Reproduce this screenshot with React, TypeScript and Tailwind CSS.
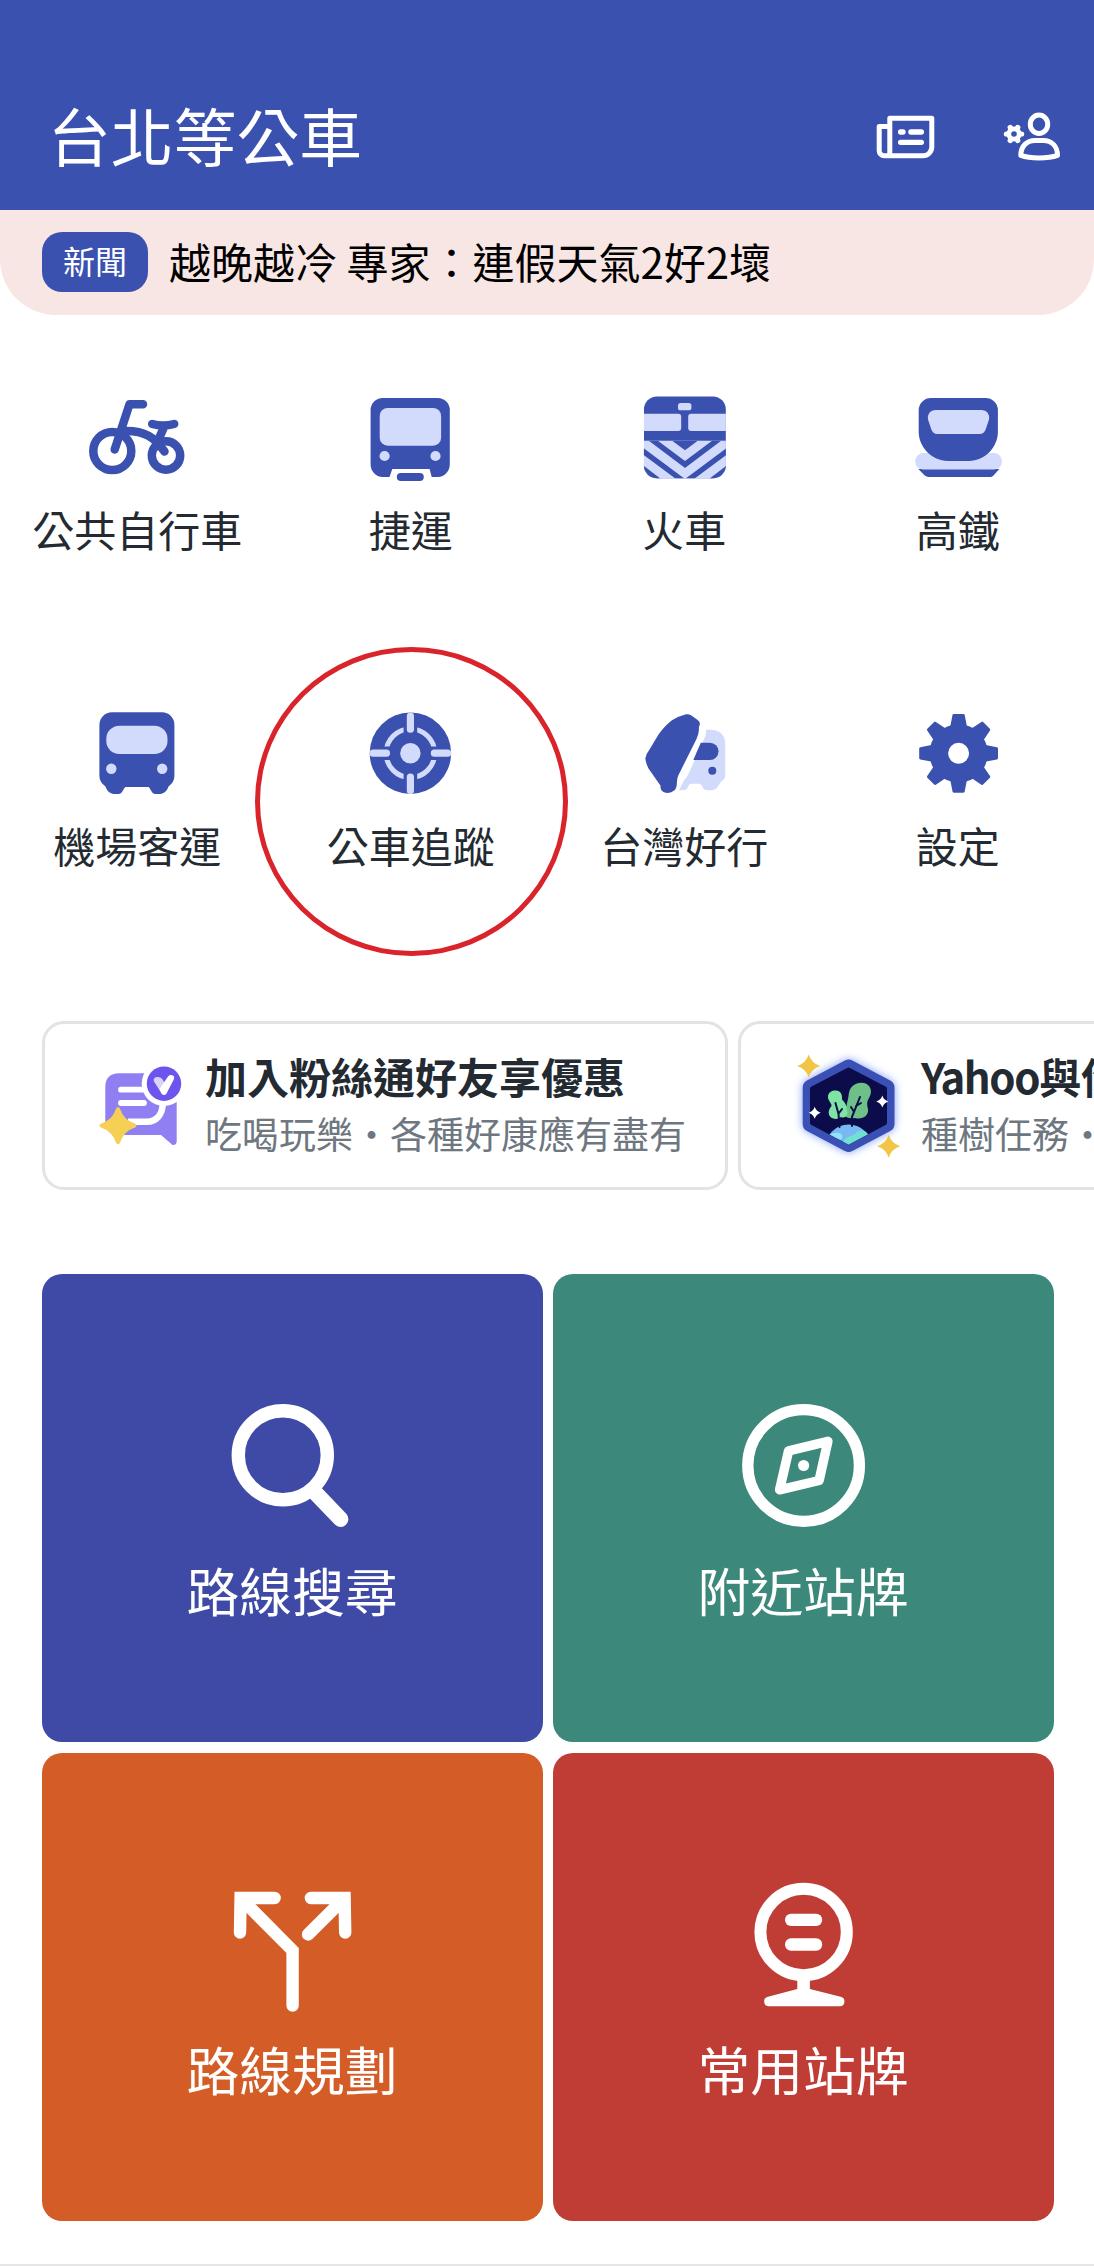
import type { ReactNode } from "react";

const BLUE = "#3b51b0";
const PALE = "#d2dbfb";

// four pointed sparkle centred on (x, y)
const Sparkle = ({ x, y, r, color, soft = 0 }: { x: number; y: number; r: number; color: string; soft?: number }) => {
  const k = r * 0.24;
  return (
    <path
      d={`M${x} ${y - r}Q${x + k} ${y - k} ${x + r} ${y}Q${x + k} ${y + k} ${x} ${y + r}Q${x - k} ${y + k} ${x - r} ${y}Q${x - k} ${y - k} ${x} ${y - r}Z`}
      fill={color}
      stroke={color}
      strokeWidth={soft}
      strokeLinejoin="round"
    />
  );
};

const NewsIcon = () => (
  <svg width="60" height="48" viewBox="0 0 60 48" fill="none" stroke="#fff" strokeWidth="5">
    <path d="M13.8 42.8V5.2H55.8V34A9 8.8 0 0 1 46.8 42.8H8.2A5 5 0 0 1 3.2 37.8V13.5H13.8" strokeLinejoin="round" />
    <path d="M24.6 19H27M34.9 19H45.4M24.6 29.3H45.4" strokeWidth="5.3" strokeLinecap="round" />
  </svg>
);

const AccountIcon = () => (
  <svg width="60" height="52" viewBox="0 0 60 52" fill="none" stroke="#fff" strokeWidth="5">
    <ellipse cx="36" cy="13.3" rx="8.7" ry="9.2" />
    <path d="M17.8 44.4C17.8 35 24 29.4 32 29.4H40.5C48.5 29.4 54.5 35 54.5 44.4C45 47.8 27 47.8 17.8 44.4Z" strokeLinejoin="round" />
    <circle cx="11" cy="23" r="5.2" strokeWidth="4.8" />
    {[0, 60, 120, 180, 240, 300].map((deg) => (
      <circle key={deg} cx="18.6" cy="23" r="2.6" fill="#fff" stroke="none" transform={`rotate(${deg} 11 23)`} />
    ))}
  </svg>
);

const BikeIcon = () => (
  <g fill="none" stroke={BLUE} strokeWidth="8.5" strokeLinecap="round" strokeLinejoin="round">
    <circle cx="23.3" cy="59" r="19" />
    <circle cx="77" cy="63.5" r="14.2" />
    <path d="M54 12.3H40.5L25.7 57.5" />
    <path d="M63.2 32C70 34 78 34 85.2 32M75.5 34L68 51" />
    <path d="M34 39C56 38 66 46 75.5 59.5" />
  </g>
);

const MetroIcon = () => (
  <g fill={BLUE}>
    <path d="M20.6 6H75.8A12 12 0 0 1 87.8 18V72A12.6 12.6 0 0 1 75.8 85H69.7L67.6 77H30.3L27.5 85H20.6A12.6 12.6 0 0 1 8.6 72V18A12 12 0 0 1 20.6 6Z" />
    <rect x="34.8" y="81" width="27" height="8" rx="4" />
    <rect x="17.7" y="16" width="61.4" height="37.7" rx="8" fill={PALE} />
    <circle cx="22.6" cy="64" r="5.1" fill={PALE} />
    <circle cx="73.5" cy="64" r="5.1" fill={PALE} />
  </g>
);

const TrainIcon = () => (
  <g fill={BLUE}>
    <clipPath id="train-body">
      <rect x="7.9" y="4.5" width="82" height="81.8" rx="13" />
    </clipPath>
    <g clipPath="url(#train-body)">
      <rect x="7.9" y="4" width="82" height="83" />
      <g fill={PALE}>
        <rect x="42" y="11" width="13.4" height="7.3" rx="2.6" />
        <path d="M7 21.7H42.2A3 3 0 0 1 45.2 24.7V36A3 3 0 0 1 42.2 39H7Z" />
        <path d="M91 21.7H55.2A3 3 0 0 0 52.2 24.7V36A3 3 0 0 0 55.2 39H91Z" />
        <rect x="7" y="48.7" width="84" height="39" />
      </g>
      <path d="M36.2 48.7H61.8L49 58.3Z" />
      <path d="M12.8 48.7H21.9L49 69L76.1 48.7H85.2L49 76Z" />
      <path d="M7 55.7L49 87L91 55.7V62.5L58 87H40L7 62.5Z" />
      <path d="M7 73.3L25 87H7ZM91 73.3L73 87H91Z" />
    </g>
  </g>
);

const HighSpeedRailIcon = () => (
  <g fill={BLUE}>
    <path d="M9.3 77H90.3L84.5 83.4Q83 85 81 85H19.5Q17.5 85 15.5 83.3Z" />
    <rect x="6.2" y="61" width="86.8" height="16.6" rx="8.2" fill={PALE} />
    <path d="M22 6H76.6A12.3 12.3 0 0 1 88.9 18V40C88.9 55 76 69 60 69H39C23 69 9.7 55 9.7 40V18A12.3 12.3 0 0 1 22 6Z" />
    <path d="M26.5 18H72.5Q81 18.5 80 27.5L76.8 37Q75.3 42 70.5 42H28.5Q23.7 42 22.2 37L19 27.5Q18 18.5 26.5 18Z" fill={PALE} />
  </g>
);

const AirportBusIcon = () => (
  <g fill={BLUE}>
    <path d="M23 4.3H73A12.4 12.4 0 0 1 85.4 17V68Q85.4 74 79.5 78.5C77.5 84 74.5 86 70 86H66.5C62 86 61.5 79 59 79H37C34.5 79 34 86 29.5 86H26C21.5 86 18.5 84 16.5 78.5Q10.4 74 10.4 68V17A12.6 12.6 0 0 1 23 4.3Z" />
    <rect x="17.3" y="17.7" width="61.2" height="28.3" rx="13" fill={PALE} />
    <circle cx="22.3" cy="60.7" r="5.2" fill={PALE} />
    <circle cx="73.2" cy="60.7" r="5.2" fill={PALE} />
  </g>
);

const TargetIcon = () => (
  <g fill={BLUE}>
    <circle cx="48.4" cy="45.2" r="40.7" />
    <circle cx="48.4" cy="45.2" r="24.3" fill="none" stroke={PALE} strokeWidth="5" />
    <path d="M41.6 14H55.2V76H41.6ZM17 38.4H79V52H17Z" />
    <circle cx="48.4" cy="45.2" r="10.2" fill={PALE} />
    {[0, 90, 180, 270].map((deg) => (
      <rect key={deg} x="44.8" y="4.4" width="7.2" height="20.4" rx="3.5" fill={PALE} transform={`rotate(${deg} 48.4 45.2)`} />
    ))}
  </g>
);

const TaiwanTripIcon = () => (
  <g fill={BLUE}>
    <path d="M50 6.3Q52.5 5.7 55 7.3L62 12.2Q64.4 14 63.7 17Q62.6 19 62.9 22Q62.7 26 60.5 31L42.5 67Q41 70 40.9 74Q41 80 38.5 82.3Q33.5 86.5 27.5 84Q24.3 82.5 24.4 77.5L12.5 60.5Q9.8 55 9.3 50.5Q10 46 13.5 41.5L22.5 26.5Q29 17.5 36 12.3Q43 8 50 6.3Z" />
    <path d="M70 21.7H75.5Q89.2 22.5 89.2 37V68.5Q88.5 71.5 86 73Q83.5 74.5 82.5 77.5Q80 82.3 75 82.3H71.5Q67 82 65.8 77.5Q65 75.7 63 75.7H55.5Q53 75.7 52 79Q50.5 82.3 47 82.3H43L48.5 71.5Q51 70 52.5 66L67.5 32.5Q70.5 27 70 21.7Z" fill={PALE} />
    <path d="M64.8 34.7H73.9A8.65 8.65 0 0 1 73.9 52H57.3Z" />
    <circle cx="76.3" cy="62.7" r="4" />
  </g>
);

const GearIcon = () => (
  <g fill={BLUE}>
    <circle cx="49.6" cy="45.3" r="19.8" fill="none" stroke={BLUE} strokeWidth="18.6" />
    {[0, 45, 90, 135, 180, 225, 270, 315].map((deg) => (
      <path key={deg} d="M44.8 5.9H54.4Q55.5 5.9 55.7 7L58.3 20.5L55 26H44.2L40.9 20.5L43.5 7Q43.7 5.9 44.8 5.9Z" transform={`rotate(${deg} 49.6 45.3)`} />
    ))}
  </g>
);

const FanIcon = () => (
  <svg width="96" height="96" viewBox="0 0 96 96" className="shrink-0">
    <path d="M25.3 15.3H72Q82.7 15.3 82.7 26V83.5Q82.3 87.3 78.5 87L67 77H25.3Q11.3 77 11.3 63V29.3Q11.3 15.3 25.3 15.3Z" fill="#8f7ff3" />
    <path d="M68.7 46C68.5 57 62 63.7 53 63.7H34" fill="none" stroke="#fff" strokeWidth="6.5" />
    <path d="M27 31.7H52M27 45H50" fill="none" stroke="#fff" strokeWidth="5.8" strokeLinecap="round" />
    <circle cx="70" cy="25.7" r="22.3" fill="#fff" />
    <circle cx="70" cy="25.7" r="17.2" fill="#6c54ec" />
    <path d="M60 23.5Q58.5 19.5 63 19Q69 18.5 70.5 26L70 36.5Q68 36.5 67 34.5Z" fill="#d9d3fb" />
    <path d="M65.5 31L74 18.5Q76 16.3 79 17.5Q81 19 79.5 22L72.5 35.5Q70 38.5 67.5 35.5Z" fill="#fff" />
    <Sparkle x={24} y={67.7} r={16.5} color="#f6cf55" soft={4} />
  </svg>
);

const TreeBadgeIcon = () => (
  <svg width="108" height="108" viewBox="0 0 108 108" className="mr-[4px] ml-[4px] shrink-0 overflow-visible">
    <path
      d="M54.6 15.5L92.5 35.5V72L54.6 92L16.7 72V35.5Z"
      fill="#3b50b4"
      stroke="#3b50b4"
      strokeWidth="16"
      strokeLinejoin="round"
      className="drop-shadow-[0_0_4px_#7f9cf8]"
    />
    <clipPath id="badge-inner">
      <path d="M54.6 15L93 35.5V72L54.6 92.5L16 72V35.5Z" />
    </clipPath>
    <path d="M54.6 17.5L91 36.5V71L54.6 90.5L18 71V36.5Z" fill="#0c0c4b" stroke="#0c0c4b" strokeWidth="4" strokeLinejoin="round" />
    <g clipPath="url(#badge-inner)">
      <circle cx="54.6" cy="96" r="23.5" fill="#78b9f4" />
      <path d="M47 92Q52 84 60 83Q66 76 72 80L80 88L56 98Z" fill="#70e0d0" />
      <path d="M34 84Q38 80 46 81Q50 84 47 88Z" fill="#8fe6f2" />
    </g>
    <path d="M61 66C50 68 47 60 52.5 54C53 50 54 48 54.5 44C55 34 62 30.5 68 30.8C77 31.5 79 40 75 46C72.5 50 73 53 74 57C75 64 68 68 61 66Z" fill="#6dc088" />
    <path d="M37 65.5C33 62 35 57 37.5 54C38 51 34 49 34 45C34 40 38 38.5 41.5 38.5C47 38.5 48.5 43 48 47.5C51 50 53 54 53 58C55 63 51 67 47 65C44 67.5 40 67.5 37 65.5Z" fill="#7fe3a3" />
    <path d="M45.5 75L44.5 62L41.5 51M45 61L48 57M58 74V65L66 45M59.5 59L57 55M62 54L67 51" fill="none" stroke="#0c0c4b" strokeWidth="2" strokeLinecap="round" />
    <Sparkle x={20.7} y={60.8} r={6} color="#fff" />
    <Sparkle x={88.3} y={49.5} r={6} color="#fff" />
    <Sparkle x={14.7} y={14} r={11.5} color="#f3c546" />
    <Sparkle x={94.7} y={94.2} r={11.5} color="#f3c546" />
  </svg>
);

const SearchIcon = () => (
  <g fill="none" stroke="#fff">
    <circle cx="57.8" cy="55.2" r="44.5" strokeWidth="13.4" />
    <path d="M91 93.5L115.6 119.2" strokeWidth="15.6" strokeLinecap="round" />
  </g>
);

const CompassIcon = () => (
  <g fill="none" stroke="#fff">
    <circle cx="67.6" cy="65.5" r="55.8" strokeWidth="11.3" />
    <path d="M91.9 41.3L52.6 50.8L43.6 89.8L83.1 80.5Z" strokeWidth="9.5" strokeLinejoin="round" />
    <circle cx="67.6" cy="65.5" r="5.6" fill="#fff" stroke="none" />
  </g>
);

const SplitIcon = () => (
  <g fill="none" stroke="#fff" strokeWidth="12.4" strokeLinecap="round">
    <path d="M49.6 19H15.6L15 53.5" />
    <path d="M17 20.5L67.6 71.5V126.5" />
    <path d="M85.9 19H119.6L120.2 53.5M118.2 20.5L83 55.5" />
  </g>
);

const StopSignIcon = () => (
  <g fill="#fff">
    <circle cx="67.6" cy="53" r="43.2" fill="none" stroke="#fff" strokeWidth="12" />
    <rect x="49" y="34.8" width="37.2" height="12.2" rx="6" />
    <rect x="49" y="59.3" width="37.2" height="12.4" rx="6" />
    <path d="M61.3 100V110L32 117.7A4.8 4.8 0 0 0 33 127.2H103.6A4.8 4.8 0 0 0 104.6 117.7L73.9 110V100Z" />
  </g>
);

const services: { label: string; icon: ReactNode }[] = [
  { label: "公共自行車", icon: <BikeIcon /> },
  { label: "捷運", icon: <MetroIcon /> },
  { label: "火車", icon: <TrainIcon /> },
  { label: "高鐵", icon: <HighSpeedRailIcon /> },
  { label: "機場客運", icon: <AirportBusIcon /> },
  { label: "公車追蹤", icon: <TargetIcon /> },
  { label: "台灣好行", icon: <TaiwanTripIcon /> },
  { label: "設定", icon: <GearIcon /> },
];

const tiles: { label: string; color: string; icon: ReactNode }[] = [
  { label: "路線搜尋", color: "bg-[#3e4aa5]", icon: <SearchIcon /> },
  { label: "附近站牌", color: "bg-[#3c887b]", icon: <CompassIcon /> },
  { label: "路線規劃", color: "bg-[#d45c26]", icon: <SplitIcon /> },
  { label: "常用站牌", color: "bg-[#c03d35]", icon: <StopSignIcon /> },
];

const PromoCard = ({ icon, title, text }: { icon: ReactNode; title: ReactNode; text: string }) => (
  <div className="flex h-[169px] w-[686px] shrink-0 items-center gap-[15px] rounded-[22px] border-3 border-[#e1e3e6] pl-[49px]">
    {icon}
    <div className="flex flex-col pb-[2px] whitespace-nowrap">
      <span className="text-[42px] leading-[58px] font-bold text-[#232a31]">{title}</span>
      <span className="text-[37px] leading-[57px] text-[#6e7780]">{text}</span>
    </div>
  </div>
);

const App = () => {
  return (
    <div className="h-[2266px] w-[1094px] overflow-hidden bg-white font-['Noto_Sans_CJK_TC',sans-serif]" lang="zh-TW">
      {/* Header */}
      <header className="flex h-[210px] items-center bg-[#3b51b0] pt-[64px] pr-[31px] pl-[48px]">
        <h1 className="flex-1 pb-[7px] text-[62.8px] leading-[80px] text-white">台北等公車</h1>
        <div className="flex items-center gap-[67px]">
          <NewsIcon />
          <AccountIcon />
        </div>
      </header>

      {/* News */}
      <div className="flex h-[105px] items-center rounded-b-[56px] bg-[#f8e6e4] pb-[2px] pl-[42px]">
        <span className="flex h-[60px] w-[106px] items-center justify-center rounded-[20px] bg-[#3b51b0] pb-[3px] text-[32px] leading-[56px] text-white">
          新聞
        </span>
        <span className="ml-[21px] pb-[2px] text-[42px] leading-[60px] text-black">越晚越冷 專家：連假天氣2好2壞</span>
      </div>

      {/* Services */}
      <nav className="relative grid grid-cols-4 gap-y-[149px] pt-[77px]">
        {services.map((item) => (
          <a key={item.label} className="flex flex-col items-center">
            <svg width="96" height="96" viewBox="0 0 96 96">
              {item.icon}
            </svg>
            <span className="mt-[11px] pl-[1px] text-[42px] leading-[60px] text-[#232a31]">{item.label}</span>
          </a>
        ))}
        <div className="absolute top-[332px] left-[255px] h-[309px] w-[313px] rounded-[50%] border-5 border-[#d9242b]" />
      </nav>

      {/* Promotions */}
      <div className="mt-[146px] flex gap-[10px] pl-[42px]">
        <PromoCard icon={<FanIcon />} title="加入粉絲通好友享優惠" text="吃喝玩樂・各種好康應有盡有" />
        <PromoCard
          icon={<TreeBadgeIcon />}
          title={
            <>
              <span className="tracking-[-1.4px]">Yahoo</span>與你一起種樹
            </>
          }
          text="種樹任務・愛護地球"
        />
      </div>

      {/* Main actions */}
      <main className="mt-[84px] grid grid-cols-2 gap-x-[10px] gap-y-[11px] pr-[40px] pl-[42px]">
        {tiles.map((tile) => (
          <button key={tile.label} className={`flex h-[468px] flex-col items-center rounded-[20px] pt-[126px] ${tile.color}`}>
            <svg width="136" height="136" viewBox="0 0 136 136">
              {tile.icon}
            </svg>
            <span className="mt-[18px] pr-[1px] text-[52.8px] leading-[70px] text-white">{tile.label}</span>
          </button>
        ))}
      </main>

      <div className="mt-[43px] h-[2px] bg-[#e6e6e6]" />
    </div>
  );
};

export default App;
